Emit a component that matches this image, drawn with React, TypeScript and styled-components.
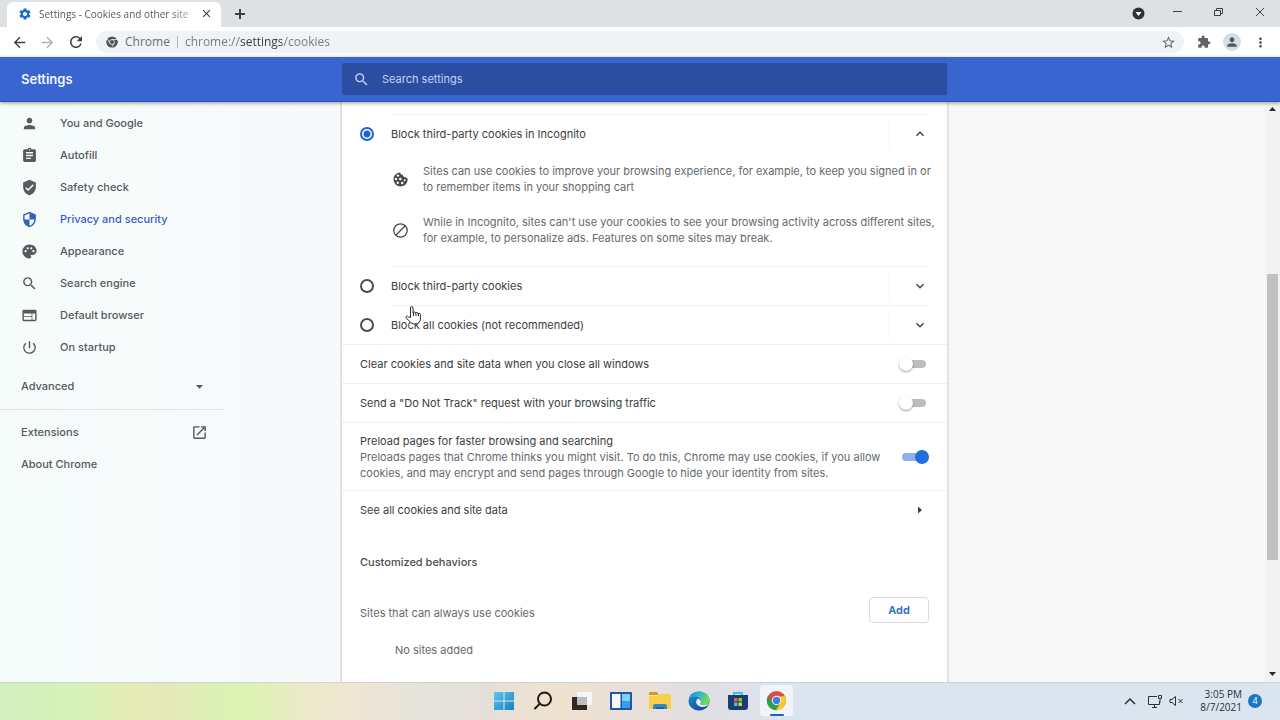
import React from "react";
import styled, { createGlobalStyle, css } from "styled-components";
import {
  MdArrowBack,
  MdArrowDropDown,
  MdArrowForward,
  MdAssignment,
  MdClose,
  MdExpandLess,
  MdExpandMore,
  MdExtension,
  MdMoreVert,
  MdOpenInNew,
  MdPalette,
  MdPerson,
  MdPowerSettingsNew,
  MdRefresh,
  MdSearch,
  MdSecurity,
  MdSettings,
  MdStarBorder,
  MdVerifiedUser,
  MdWeb,
} from "react-icons/md";

const ui = `Inter, Roboto, "Liberation Sans", sans-serif`;
const system = `"Open Sans", "Noto Sans", sans-serif`;

const color = {
  text: "#3a3d41",
  muted: "#65696e",
  line: "#f0f0f2",
  faint: "#f5f5f6",
  blue: "#1a63d2",
  header: "#3965d0",
  field: "#2b4ea3",
};

const GlobalStyle = createGlobalStyle`
  *, *::before, *::after { box-sizing: border-box; }
  body { margin: 0; font-family: ${ui}; font-size: 11px; line-height: 16px; color: ${color.text}; background: #fff; }
  button, input { font: inherit; color: inherit; }
  button { border: 0; padding: 0; background: none; cursor: pointer; }
  a { color: inherit; text-decoration: none; }
  h1, h2, p, ul { margin: 0; padding: 0; font-size: inherit; }
  ul { list-style: none; }
  svg { display: block; flex: none; }
`;

const Screen = styled.div`
  display: flex;
  flex-direction: column;
  height: 100vh;
  overflow: hidden;
`;

/* Browser frame */

const TabStrip = styled.div`
  display: flex;
  flex: none;
  height: 27px;
  padding: 2px 0 0 7px;
  background: #dee1e4;
`;

const Tab = styled.div`
  display: flex;
  align-items: center;
  width: 214px;
  padding: 0 8px 2px 11px;
  border-radius: 6px 6px 0 0;
  background: #fff;
  color: #55585c;
  font-family: ${system};
  font-size: 10px;
`;

const TabTitle = styled.span`
  flex: 1;
  min-width: 0;
  margin: 0 7px;
  white-space: nowrap;
  mask-image: linear-gradient(to right, #000 85%, rgba(0, 0, 0, 0.4));
`;

const IconButton = styled.button<{ $w?: number; $tone?: string }>`
  display: flex;
  align-items: center;
  justify-content: center;
  flex: none;
  width: ${(p) => p.$w ?? 28}px;
  color: ${(p) => p.$tone ?? "#3c4043"};
`;

const WindowControls = styled.div`
  display: flex;
  margin-left: auto;
  padding-bottom: 3px;
`;

const Toolbar = styled.div`
  display: flex;
  align-items: center;
  flex: none;
  height: 30px;
  padding: 0 5px;
  background: #fff;
`;

const Omnibox = styled.div`
  display: flex;
  align-items: center;
  flex: 1;
  height: 22px;
  margin: 0 5px;
  padding: 0 8px 0 10px;
  border-radius: 11px;
  background: #f0f2f3;
  color: #6b6f73;
  font-family: ${system};
  font-size: 12px;
`;

const Origin = styled.span`
  margin-left: 7px;
  padding-right: 7px;
  border-right: 1px solid #b4b7ba;
  line-height: 12px;
`;

const Address = styled.input`
  flex: 1;
  min-width: 0;
  padding: 0;
  margin-left: 7px;
  border: 0;
  outline: 0;
  color: transparent;
  background: linear-gradient(to right, #74787c 54px, #35383c 54px, #35383c 97px, #74787c 97px);
  background-clip: text;
`;

const Avatar = styled.span`
  display: flex;
  align-items: center;
  justify-content: center;
  width: 18px;
  height: 18px;
  border-radius: 50%;
  background: #d9dce1;
`;

/* Settings page */

const columns = css`
  display: grid;
  grid-template-columns: minmax(0, 342fr) minmax(0, 605fr) minmax(0, 333fr);
`;

const Header = styled.header`
  ${columns}
  position: relative;
  z-index: 1;
  flex: none;
  align-items: center;
  height: 45px;
  background: ${color.header};
  border-bottom: 1px solid #2c56b4;
  box-shadow: 0 1px 4px rgba(0, 0, 0, 0.4);
`;

const Title = styled.h1`
  padding-left: 21px;
  color: #f2f6ff;
  font-size: 13px;
  font-weight: 600;
`;

const SearchField = styled.label`
  display: flex;
  align-items: center;
  gap: 12px;
  height: 32px;
  padding: 0 11px;
  border-radius: 2px;
  background: ${color.field};
  color: #c3d2f3;
`;

const SearchInput = styled.input`
  flex: 1;
  min-width: 0;
  padding: 0;
  border: 0;
  outline: 0;
  background: none;
  &::placeholder {
    color: #c3d2f3;
    opacity: 1;
  }
`;

const Page = styled.div`
  ${columns}
  position: relative;
  flex: 1;
  min-height: 0;
  overflow: hidden;
  background: linear-gradient(to right, #f5fcfa, #f7f9fb 27%, #f8f8f9 75%);
`;

const Sidebar = styled.nav`
  max-width: 224px;
  padding-top: 5px;
  color: #56595d;
  font-weight: 500;
`;

const NavLink = styled.a<{ $active?: boolean; $plain?: boolean }>`
  display: flex;
  align-items: center;
  gap: 22px;
  height: 32px;
  padding: 0 16px 0 21px;
  justify-content: ${(p) => (p.$plain ? "space-between" : "flex-start")};
  color: ${(p) => (p.$active ? "#3560bd" : "inherit")};
`;

const AdvancedButton = styled.button`
  display: flex;
  align-items: center;
  justify-content: space-between;
  width: 100%;
  height: 46px;
  padding: 0 16px 0 21px;
  font-weight: 500;
`;

const NavGroup = styled.div`
  padding-top: 6px;
  border-top: 1px solid #e0e3e4;
`;

const Card = styled.main`
  background: #fff;
  box-shadow: 0 0 2px 1px rgba(60, 64, 67, 0.22);
`;

const Stub = styled.div`
  height: 13px;
  margin: 0 18px 0 50px;
  border-bottom: 1px solid ${color.line};
`;

const Option = styled.div`
  display: flex;
  align-items: center;
  position: relative;
  height: 38px;
  padding: 0 18px;
`;

const Rule = styled.hr<{ $inset?: boolean }>`
  height: 1px;
  margin: 0 ${(p) => (p.$inset ? "18px 0 50px" : "0")};
  border: 0;
  background: ${color.line};
`;

const OptionLabel = styled.label`
  display: flex;
  align-items: center;
  flex: 1;
  gap: 17px;
`;

const Radio = styled.input`
  appearance: none;
  width: 14px;
  height: 14px;
  margin: 0;
  border: 2px solid #4b4e52;
  border-radius: 50%;
  &:checked {
    border-color: ${color.blue};
    background: radial-gradient(circle, ${color.blue} 3px, transparent 4px);
  }
`;

const Expander = styled.button`
  display: flex;
  align-items: center;
  justify-content: flex-end;
  width: 40px;
  height: 28px;
  padding-right: 1px;
  border-left: 1px solid ${color.faint};
  color: #3c4043;
`;

const Details = styled.ul`
  display: flex;
  flex-direction: column;
  gap: 19px;
  padding: 10px 10px 20px 50px;
  color: ${color.muted};
`;

const Detail = styled.li`
  display: flex;
  align-items: center;
  gap: 14px;
  svg {
    color: #45484c;
  }
`;

const Row = styled.label<{ $tall?: boolean }>`
  display: flex;
  align-items: center;
  justify-content: space-between;
  min-height: 38px;
  padding: ${(p) => (p.$tall ? "10px 18px 9px" : "0 18px")};
`;

const RowText = styled.span`
  flex: 1;
  padding-right: 12px;
`;

const Sub = styled.span`
  display: block;
  color: ${color.muted};
`;

const Toggle = styled.input`
  appearance: none;
  position: relative;
  flex: none;
  width: 30px;
  height: 14px;
  margin: 0;
  &::before {
    content: "";
    position: absolute;
    inset: 3px;
    border-radius: 4px;
    background: #bdbdbd;
  }
  &::after {
    content: "";
    position: absolute;
    top: 0;
    left: 0;
    width: 14px;
    height: 14px;
    border-radius: 50%;
    background: #fff;
    box-shadow: 0 1px 2px rgba(0, 0, 0, 0.4);
  }
  &:checked::before {
    background: #8db0ee;
  }
  &:checked::after {
    left: 16px;
    background: #1f6fe3;
    box-shadow: none;
  }
`;

const LinkRow = styled.a`
  display: flex;
  align-items: center;
  justify-content: space-between;
  height: 38px;
  padding: 0 18px;
`;

const SectionTitle = styled.h2`
  padding: 25px 18px 0;
  color: #4a4d51;
  font-weight: 500;
`;

const SiteHeading = styled.div`
  display: flex;
  align-items: flex-end;
  justify-content: space-between;
  padding: 27px 18px 0;
  color: ${color.muted};
`;

const SiteLabel = styled.span`
  padding-bottom: 2px;
`;

const AddButton = styled.button`
  width: 60px;
  height: 26px;
  border: 1px solid #dadce0;
  border-radius: 4px;
  color: #2a6bc0;
  font-weight: 600;
`;

const Empty = styled.p`
  padding: 19px 18px 0 53px;
  color: ${color.muted};
`;

const Pointer = styled.svg`
  position: absolute;
  left: 63px;
  top: 0;
`;

const ScrollTrack = styled.div`
  position: absolute;
  top: 0;
  right: 0;
  bottom: 0;
  display: flex;
  flex-direction: column;
  align-items: center;
  width: 15px;
  padding: 5px 0 6px;
  background: #f2f2f2;
`;

const ScrollSpace = styled.div<{ $grow: number }>`
  flex: ${(p) => p.$grow} 0 0;
`;

const ScrollThumb = styled.div`
  flex: 287 0 0;
  width: 11px;
  background: #c0c0c0;
`;

/* Taskbar */

const Taskbar = styled.footer`
  display: grid;
  grid-template-columns: 1fr auto 1fr;
  flex: none;
  height: 38px;
  border-top: 1px solid #cfd3d2;
  background: linear-gradient(
    to right,
    #d3f0bf 0%,
    #d5f2b8 6%,
    #e4ecb4 10%,
    #e6e8ba 13%,
    #daf3b5 17%,
    #def3b6 20%,
    #e9ebc6 23%,
    #efe7d2 27%,
    #e6e3dc 33%,
    #e5dfda 38%,
    #f0e2cf 43%,
    #e8dfd8 50%,
    #e0dfe6 56%,
    #dbe4f0 62%,
    #dae5ef 100%
  );
`;

const AppList = styled.div`
  display: flex;
  grid-column: 2;
`;

const AppButton = styled.button<{ $active?: boolean }>`
  display: flex;
  flex-direction: column;
  align-items: center;
  justify-content: center;
  position: relative;
  width: 33px;
  height: 31px;
  margin: 2px 3px;
  border-radius: 3px;
  background: ${(p) => (p.$active ? "#f1f4f9" : "none")};
  &::after {
    content: "";
    display: ${(p) => (p.$active ? "block" : "none")};
    position: absolute;
    bottom: 0;
    width: 14px;
    height: 2px;
    border-radius: 1px;
    background: #1767b4;
  }
`;

const Tray = styled.div`
  display: flex;
  align-items: center;
  justify-content: flex-end;
  padding: 0 18px 2px 0;
  color: #2d3136;
`;

const TrayButton = styled.button<{ $w: number }>`
  display: flex;
  justify-content: center;
  width: ${(p) => p.$w}px;
`;

const Clock = styled.div`
  margin-left: 15px;
  font-family: ${system};
  font-size: 10px;
  line-height: 13px;
  text-align: right;
`;

const Badge = styled.span`
  width: 14px;
  height: 14px;
  margin-left: 6px;
  border-radius: 50%;
  background: #1a78c2;
  color: #fff;
  font-family: ${system};
  font-size: 9px;
  line-height: 14px;
  text-align: center;
`;

const ChromeMark = ({ size, mono }: { size: number; mono?: boolean }) => (
  <svg width={size} height={size} viewBox="0 0 24 24" aria-hidden>
    <circle cx="12" cy="12" r="11" fill={mono ? "#4d5155" : "#dd4b3e"} />
    <path d="M2.4 6.6 7.67 14.5 16.33 14.5 11.4 23A11 11 0 0 1 2.4 6.6Z" fill={mono ? "#4d5155" : "#2e9e4f"} />
    <path d="M12 7H21.8A11 11 0 0 1 11.4 23L16.33 14.5Z" fill={mono ? "#4d5155" : "#fbc926"} />
    {mono && <path d="M12 7H22M7.67 14.5 2.6 6M16.33 14.5 11.4 23" stroke="#f0f2f3" strokeWidth="1.6" fill="none" />}
    <circle cx="12" cy="12" r="5.4" fill="#f3f5f8" />
    <circle cx="12" cy="12" r="4.2" fill={mono ? "#4d5155" : "#3f80e6"} />
  </svg>
);

const CookieMark = () => (
  <svg width="17" height="17" viewBox="0 0 17 17" aria-hidden>
    <path
      fill="currentColor"
      d="M8.2 1.500c.2 1.500 1 2.300 2.600 2.300.2 1.700 1.200 2.600 2.700 2.500.5.700 1.100 1 2.100 1.100.5 4.400-2.900 8-7.100 8A7 7 0 0 1 1.500 8.500c0-3.900 3.100-7 6.700-7Z"
    />
    <g fill="#fff">
      <circle cx="6" cy="4.600" r="1.200" />
      <circle cx="4" cy="8" r="1.200" />
      <circle cx="8.300" cy="8" r="1.300" />
      <circle cx="5.800" cy="11.800" r="1.200" />
      <circle cx="10.200" cy="12" r="1.200" />
      <circle cx="12.600" cy="9.300" r="1" />
    </g>
  </svg>
);

const Chevron = ({ up }: { up?: boolean }) => (up ? <MdExpandLess size={16} /> : <MdExpandMore size={16} />);

const navItems = [
  { label: "You and Google", icon: <MdPerson size={17} /> },
  { label: "Autofill", icon: <MdAssignment size={17} /> },
  { label: "Safety check", icon: <MdVerifiedUser size={17} /> },
  { label: "Privacy and security", icon: <MdSecurity size={17} />, active: true },
  { label: "Appearance", icon: <MdPalette size={17} /> },
  { label: "Search engine", icon: <MdSearch size={17} /> },
  { label: "Default browser", icon: <MdWeb size={17} /> },
  { label: "On startup", icon: <MdPowerSettingsNew size={17} /> },
];

const apps = [
  {
    name: "Start",
    art: (
      <svg width="22" height="20" viewBox="0 0 22 20">
        <defs>
          <linearGradient id="win" x1="0" y1="0" x2="1" y2="1">
            <stop offset="0" stopColor="#5cc8ee" />
            <stop offset="1" stopColor="#1580c6" />
          </linearGradient>
        </defs>
        <path fill="url(#win)" d="M1 1h9.5v8.5H1zM11.5 1H21v8.5h-9.5zM1 10.500h9.500V19H1zM11.500 10.500H21V19h-9.500z" />
      </svg>
    ),
  },
  {
    name: "Search",
    art: (
      <svg width="20" height="20" viewBox="0 0 20 20" fill="none" stroke="#1c1a1a" strokeWidth="2" strokeLinecap="round">
        <circle cx="11.500" cy="8" r="6.500" />
        <path d="M6.800 12.700 2 17.500" />
      </svg>
    ),
  },
  {
    name: "Task view",
    art: (
      <svg width="22" height="20" viewBox="0 0 22 20">
        <path fill="#f6f6f6" d="M6 1h15v13H6z" />
        <path fill="#2b2828" d="M1 6h15v13H1z" />
        <path fill="#bcbcbc" d="M6 6h10v8H6z" />
      </svg>
    ),
  },
  {
    name: "Widgets",
    art: (
      <svg width="22" height="20" viewBox="0 0 22 20">
        <rect x="0" y="1" width="22" height="18" rx="1" fill="#1c56a5" />
        <path fill="#f4f8fc" d="M2 3h8.500v14H2z" />
        <path fill="#7cd3f7" d="M12 3h8v7h-8z" />
        <path fill="#3a9be6" d="M12 10h8v7h-8z" />
      </svg>
    ),
  },
  {
    name: "File Explorer",
    art: (
      <svg width="22" height="20" viewBox="0 0 22 20">
        <path fill="#d69a1f" d="M0 2q0-1 1-1h7l2 3H0z" />
        <path fill="#f9cf4a" d="M0 5h9l2-2h10q1 0 1 1v13q0 1-1 1H1q-1 0-1-1z" />
        <path fill="#2f87c8" d="M4 18v-3q0-2 2-2h10q2 0 2 2v3z" />
        <path fill="#1a66a6" d="M7 18v-2h8v2z" />
      </svg>
    ),
  },
  {
    name: "Edge",
    art: (
      <svg width="22" height="20" viewBox="0 0 24 24" preserveAspectRatio="none">
        <defs>
          <linearGradient id="edgeTop" x1="0" y1="0" x2="1" y2="0.400">
            <stop offset="0" stopColor="#1d86d6" />
            <stop offset="0.500" stopColor="#2fb5d3" />
            <stop offset="1" stopColor="#6fdc5a" />
          </linearGradient>
          <linearGradient id="edgeLow" x1="0" y1="0" x2="1" y2="1">
            <stop offset="0" stopColor="#1c8fdc" />
            <stop offset="1" stopColor="#123f86" />
          </linearGradient>
        </defs>
        <circle cx="12" cy="12" r="11.500" fill="url(#edgeLow)" />
        <path
          fill="url(#edgeTop)"
          d="M.6 10.500C1.600 4.600 6.400.500 12 .500c6.700 0 11.500 4.900 11.500 10.200 0 4-3 6.300-6.200 6.300-2.600 0-4-1-4-1.700 0-.500.900-1 .900-3 0-2.900-2.700-5.300-6.200-5.300-3.800 0-6.400 1.600-7.400 3.500Z"
        />
        <path
          fill="#e8eef4"
          d="M13.300 15.300c0 .700 1.400 1.700 4 1.700 2 0 3.700-.700 4.800-1.900l.500.900c-1.700 2.200-4 3.100-6.300 3.100-4.300 0-7.400-2.800-7.400-6 0-1.800.900-3.200 2.300-4 1.900.800 3 2.500 3 4.200 0 1-.900 1.500-.9 2Z"
        />
      </svg>
    ),
  },
  {
    name: "Microsoft Store",
    art: (
      <svg width="22" height="20" viewBox="0 0 22 20">
        <path fill="none" stroke="#4db5e8" strokeWidth="2" d="M7 5V2h8v3" />
        <path fill="#173f70" d="M1 4h20v12q0 3-3 3H4q-3 0-3-3z" />
        <path fill="#e8603c" d="M7 7h3.500v3.500H7z" />
        <path fill="#8cc63f" d="M11.500 7H15v3.500h-3.500z" />
        <path fill="#4db5e8" d="M7 11.500h3.500V15H7z" />
        <path fill="#f6c634" d="M11.500 11.500H15V15h-3.500z" />
      </svg>
    ),
  },
  { name: "Google Chrome", art: <ChromeMark size={21} />, active: true },
];

export default function App() {
  return (
    <Screen>
      <GlobalStyle />
      <TabStrip>
        <Tab>
          <MdSettings size={14} color="#1a6ad0" />
          <TabTitle>Settings - Cookies and other site</TabTitle>
          <IconButton $w={14} aria-label="Close tab">
            <MdClose size={13} />
          </IconButton>
        </Tab>
        <IconButton $w={38} aria-label="New tab">
          <svg width="12" height="14" viewBox="0 0 12 14" stroke="currentColor" strokeWidth="2">
            <path d="M6 1v10M1 6h10" />
          </svg>
        </IconButton>
        <WindowControls>
          <IconButton $w={38} aria-label="Search tabs">
            <svg width="13" height="13" viewBox="0 0 13 13">
              <circle cx="6.500" cy="6.500" r="6" fill="#303338" />
              <path d="M3.500 5h6l-3 4z" fill="#fff" />
            </svg>
          </IconButton>
          <IconButton $w={41} aria-label="Minimize">
            <svg width="12" height="12" viewBox="0 0 12 12" stroke="currentColor">
              <path d="M1 4.500h9" />
            </svg>
          </IconButton>
          <IconButton $w={41} aria-label="Restore">
            <svg width="11" height="12" viewBox="0 0 11 12" stroke="currentColor" fill="none">
              <path d="M1.500 3.500h6v5h-6zM3.500 3V1.500h6v5H8" />
            </svg>
          </IconButton>
          <IconButton $w={41} aria-label="Close">
            <svg width="10" height="12" viewBox="0 0 10 12" stroke="currentColor">
              <path d="m1 1 8 8M9 1 1 9" />
            </svg>
          </IconButton>
        </WindowControls>
      </TabStrip>
      <Toolbar>
        <IconButton aria-label="Back">
          <MdArrowBack size={17} />
        </IconButton>
        <IconButton aria-label="Forward" $tone="#aeb1b4">
          <MdArrowForward size={17} />
        </IconButton>
        <IconButton $w={30} aria-label="Reload">
          <MdRefresh size={18} />
        </IconButton>
        <Omnibox>
          <ChromeMark size={12} mono />
          <Origin>Chrome</Origin>
          <Address aria-label="Address" defaultValue="chrome://settings/cookies" />
          <IconButton $w={16} $tone="#5f6368" aria-label="Bookmark">
            <MdStarBorder size={15} />
          </IconButton>
        </Omnibox>
        <IconButton $w={29} $tone="#5f6368" aria-label="Extensions">
          <MdExtension size={14} />
        </IconButton>
        <IconButton $w={28} $tone="#4b5568" aria-label="Profile">
          <Avatar>
            <MdPerson size={14} />
          </Avatar>
        </IconButton>
        <IconButton $w={29} aria-label="Menu">
          <MdMoreVert size={15} />
        </IconButton>
      </Toolbar>

      <Header>
        <Title>Settings</Title>
        <SearchField>
          <MdSearch size={17} />
          <SearchInput type="search" placeholder="Search settings" aria-label="Search settings" />
        </SearchField>
      </Header>

      <Page>
        <Sidebar>
          {navItems.map((item) => (
            <NavLink key={item.label} href="#" $active={item.active}>
              {item.icon}
              {item.label}
            </NavLink>
          ))}
          <AdvancedButton>
            Advanced
            <MdArrowDropDown size={17} />
          </AdvancedButton>
          <NavGroup>
            <NavLink href="#" $plain>
              Extensions
              <MdOpenInNew size={17} />
            </NavLink>
            <NavLink href="#" $plain>
              About Chrome
            </NavLink>
          </NavGroup>
        </Sidebar>

        <Card>
          <Stub />
          <Option>
            <OptionLabel>
              <Radio type="radio" name="cookies" defaultChecked />
              Block third-party cookies in Incognito
            </OptionLabel>
            <Expander aria-label="Collapse">
              <Chevron up />
            </Expander>
          </Option>
          <Details>
            <Detail>
              <CookieMark />
              <p>
                Sites can use cookies to improve your browsing experience, for example, to keep you signed in or to
                remember items in your shopping cart
              </p>
            </Detail>
            <Detail>
              <svg width="17" height="17" viewBox="0 0 17 17" fill="none" stroke="currentColor" strokeWidth="1.300">
                <circle cx="8.500" cy="8.500" r="6.700" />
                <path d="m4 13 9-9" />
              </svg>
              <p>
                While in Incognito, sites can't use your cookies to see your browsing activity across different sites,
                for example, to personalize ads. Features on some sites may break.
              </p>
            </Detail>
          </Details>
          <Rule $inset />
          <Option>
            <OptionLabel>
              <Radio type="radio" name="cookies" />
              Block third-party cookies
            </OptionLabel>
            <Expander aria-label="Expand">
              <Chevron />
            </Expander>
          </Option>
          <Rule $inset />
          <Option>
            <OptionLabel>
              <Radio type="radio" name="cookies" />
              Block all cookies (not recommended)
            </OptionLabel>
            <Expander aria-label="Expand">
              <Chevron />
            </Expander>
            <Pointer width="17" height="19" viewBox="0 0 17 19" aria-hidden>
              <path
                fill="#fff"
                stroke="#2a2a2a"
                strokeLinejoin="round"
                d="M5.500 11.500V2q0-1.500 1.200-1.500T8 2v5q0-1.200 1.200-1.200t1.300 1.200v.500q0-1 1.200-1t1.300 1v.700q0-.900 1.100-.9t1.300 1.200v4.500q0 2-1.500 3.600-1 1.400-4.200 1.400-3 0-4.200-1.800L1 11.800q-.500-1.200.6-1.600 1-.3 1.900.7z"
              />
              <path stroke="#2a2a2a" d="M8.500 7v3M11 7.500V10M13.500 8v2" />
            </Pointer>
          </Option>
          <Rule />
          <Row>
            <RowText>Clear cookies and site data when you close all windows</RowText>
            <Toggle type="checkbox" role="switch" />
          </Row>
          <Rule />
          <Row>
            <RowText>Send a "Do Not Track" request with your browsing traffic</RowText>
            <Toggle type="checkbox" role="switch" />
          </Row>
          <Rule />
          <Row $tall>
            <RowText>
              Preload pages for faster browsing and searching
              <Sub>
                Preloads pages that Chrome thinks you might visit. To do this, Chrome may use cookies, if you allow
                cookies, and may encrypt and send pages through Google to hide your identity from sites.
              </Sub>
            </RowText>
            <Toggle type="checkbox" role="switch" defaultChecked />
          </Row>
          <Rule />
          <LinkRow href="#">
            See all cookies and site data
            <svg width="18" height="12" viewBox="0 0 18 12" fill="#3c4043">
              <path d="M7 2.500v7l4-3.500z" />
            </svg>
          </LinkRow>
          <SectionTitle>Customized behaviors</SectionTitle>
          <SiteHeading>
            <SiteLabel>Sites that can always use cookies</SiteLabel>
            <AddButton>Add</AddButton>
          </SiteHeading>
          <Empty>No sites added</Empty>
        </Card>

        <ScrollTrack aria-hidden>
          <svg width="7" height="4" viewBox="0 0 7 4">
            <path d="M0 4h7L3.500 0z" fill="#2b2b2b" />
          </svg>
          <ScrollSpace $grow={163} />
          <ScrollThumb />
          <ScrollSpace $grow={112} />
          <svg width="7" height="4" viewBox="0 0 7 4">
            <path d="M0 0h7L3.500 4z" fill="#2b2b2b" />
          </svg>
        </ScrollTrack>
      </Page>

      <Taskbar>
        <AppList>
          {apps.map((app) => (
            <AppButton key={app.name} aria-label={app.name} $active={app.active}>
              {app.art}
            </AppButton>
          ))}
        </AppList>
        <Tray>
          <TrayButton $w={24} aria-label="Show hidden icons">
            <svg width="12" height="8" viewBox="0 0 12 8" fill="none" stroke="currentColor" strokeWidth="1.500">
              <path d="m1 7 5-5 5 5" />
            </svg>
          </TrayButton>
          <TrayButton $w={25} aria-label="Network">
            <svg width="16" height="14" viewBox="0 0 16 14" fill="none" stroke="currentColor">
              <path d="M10 2.500H1.500v8h11V7M5 13.500h5M7.500 10.500v3" />
              <path d="M11.500 1.500h3v3h-3zM13 4.500V9" />
            </svg>
          </TrayButton>
          <TrayButton $w={18} aria-label="Volume">
            <svg width="15" height="12" viewBox="0 0 15 12" fill="none" stroke="currentColor">
              <path d="M1 4.500h2l3.500-3v9L3 7.500H1zM9.500 4l4 4M13.500 4l-4 4" />
            </svg>
          </TrayButton>
          <Clock>
            3:05 PM
            <br />
            8/7/2021
          </Clock>
          <Badge>4</Badge>
        </Tray>
      </Taskbar>
    </Screen>
  );
}
